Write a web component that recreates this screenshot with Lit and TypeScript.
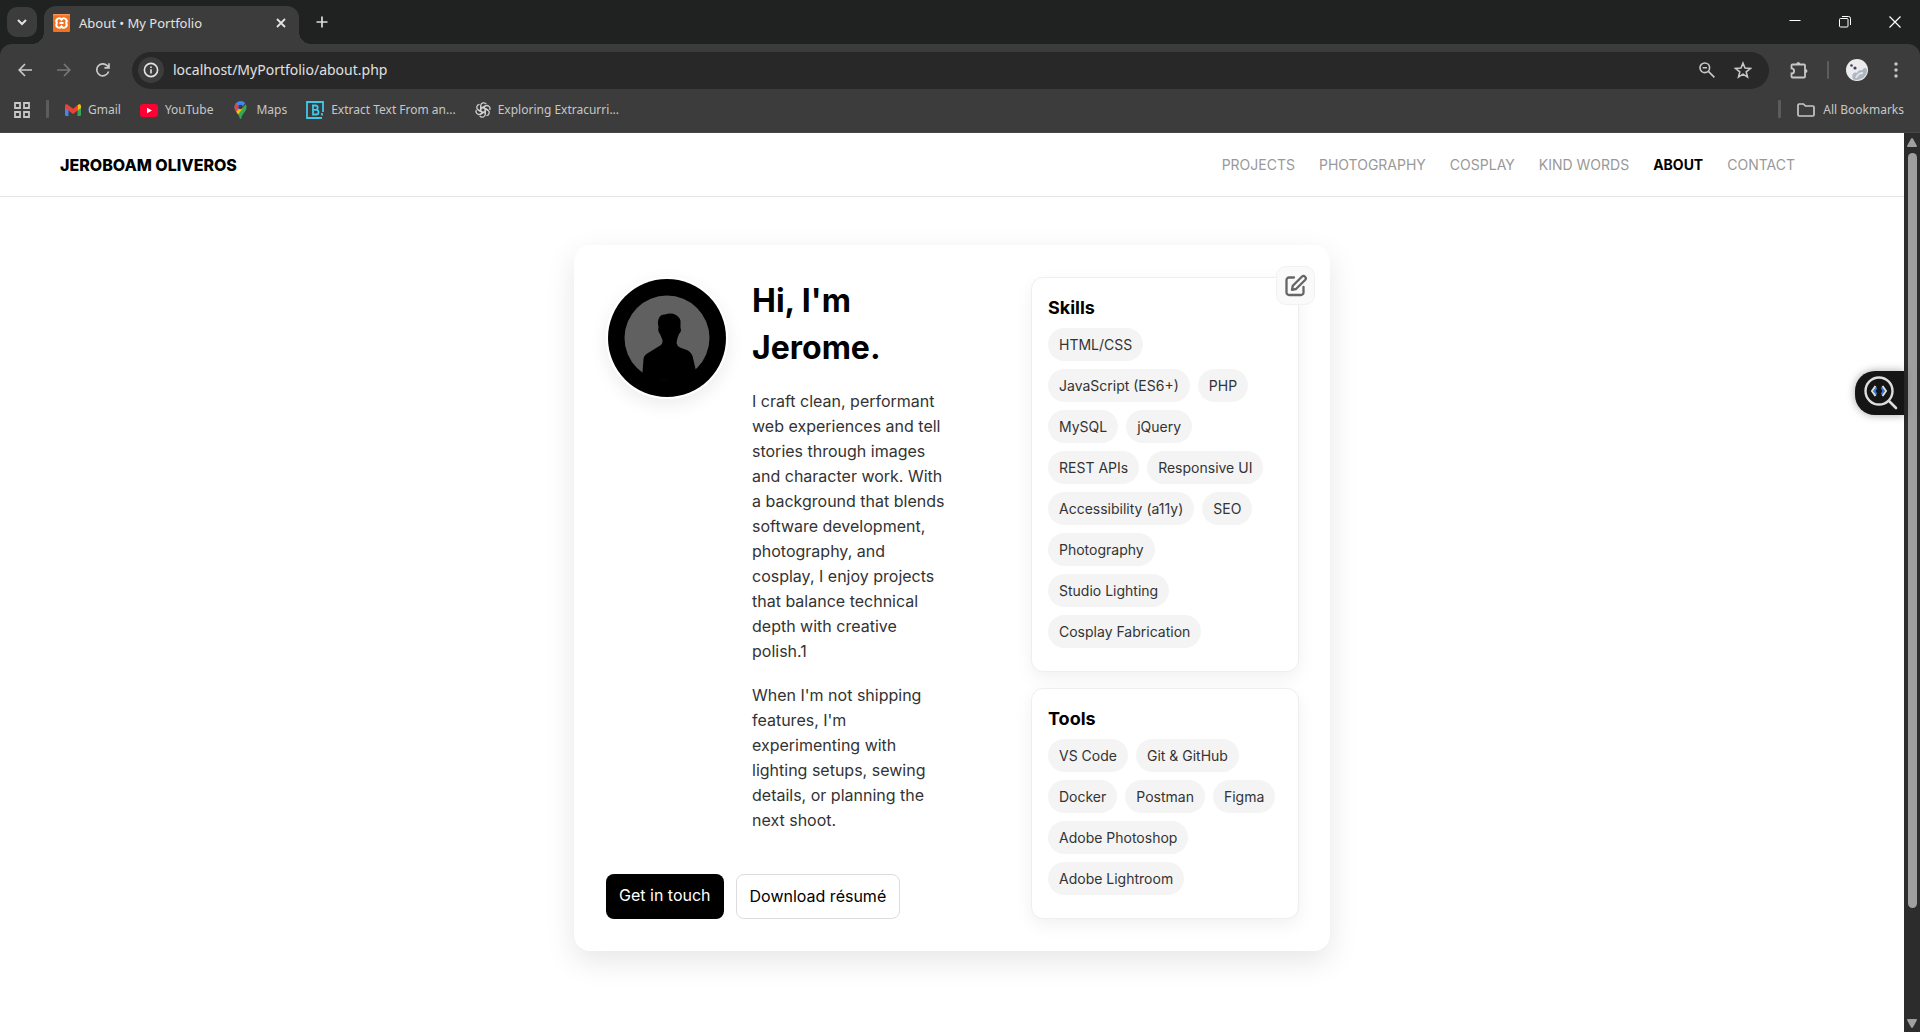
import { LitElement, html, css, svg } from "lit";
import { customElement } from "lit/decorators.js";

const skills = ["HTML/CSS", "JavaScript (ES6+)", "PHP", "MySQL", "jQuery", "REST APIs", "Responsive UI", "Accessibility (a11y)", "SEO", "Photography", "Studio Lighting", "Cosplay Fabrication"];
const tools = ["VS Code", "Git & GitHub", "Docker", "Postman", "Figma", "Adobe Photoshop", "Adobe Lightroom"];
const nav = ["Projects", "Photography", "Cosplay", "Kind Words", "About", "Contact"];

@customElement("browser-chrome")
class BrowserChrome extends LitElement {
  static styles = css`
    :host { display: block; flex: none; background: #202221; color: #e3e3e3; font: 13px/20px "Noto Sans", "Open Sans", sans-serif; }
    button { border: 0; padding: 0; margin: 0; background: none; color: inherit; font: inherit; display: grid; place-items: center; flex: none; }
    svg { display: block; flex: none; }
    a { color: inherit; text-decoration: none; }
    .strip { height: 44px; display: flex; align-items: center; }
    .search { width: 30px; height: 30px; border-radius: 10px; background: #3c3c3c; margin-left: 7px; }
    .tab { position: relative; align-self: flex-end; height: 38px; width: 255px; margin-left: 7px; border-radius: 12px 12px 0 0; background: #3c3c3c; display: flex; align-items: center; padding: 0 8px 4px 9px; box-sizing: border-box; }
    .tab::before, .tab::after { content: ""; position: absolute; bottom: 0; width: 12px; height: 12px; }
    .tab::before { left: -12px; background: radial-gradient(circle at 0 0, transparent 12px, #3c3c3c 12px); }
    .tab::after { right: -12px; background: radial-gradient(circle at 100% 0, transparent 12px, #3c3c3c 12px); }
    .title { flex: 1; margin-left: 9px; }
    .close, .plus { width: 20px; height: 20px; }
    .plus { margin-left: 13px; }
    .space { flex: 1; }
    .win { width: 50px; height: 44px; }
    .bars { background: #3c3c3c; border-radius: 12px 12px 0 0; border-bottom: 1px solid #474747; }
    .bar { height: 52px; display: flex; align-items: center; padding-right: 6px; }
    .nav { width: 39px; height: 34px; color: #c7c7c7; }
    .nav.off { color: #777; }
    .navs { display: flex; margin-left: 5px; }
    .omni { flex: 1; height: 37px; border-radius: 19px; background: #282828; display: flex; align-items: center; margin: 0 12px 0 10px; padding: 0 8px 0 6px; color: #c7c7c7; }
    .info { width: 26px; height: 26px; border-radius: 50%; background: #3c3c3c; color: #e3e3e3; }
    input { flex: 1; border: 0; outline: 0; background: none; color: #e0e0e0; font: 14px/20px "Noto Sans", "Open Sans", sans-serif; padding: 0 0 0 9px; }
    .ico { width: 36px; height: 34px; color: #c7c7c7; }
    .sep { width: 2px; height: 18px; background: #5c5c5c; border-radius: 1px; }
    .bar .sep { margin: 0 17px 0 10px; }
    .face { margin-right: 10px; }
    .marks { box-sizing: border-box; height: 36px; display: flex; align-items: flex-start; padding: 4px 16px 0 14px; color: #c7c7c7; font-size: 12px; }
    .marks > * { height: 20px; display: flex; align-items: center; }
    .marks .sep { width: 3px; height: 18px; margin: 0 16px; }
    .mark { gap: 7px; white-space: nowrap; margin-right: 19px; }
    .all { gap: 8px; margin: 0; }
  `;
  render() {
    return html`
      <div class="strip">
        <button class="search" aria-label="Search tabs"><svg width="10" height="8" viewBox="0 0 10 8"><path d="M1 2l4 4 4-4" fill="none" stroke="#e3e3e3" stroke-width="2"/></svg></button>
        <div class="tab">
          <svg width="17" height="18" viewBox="0 0 17 18"><rect width="17" height="18" rx="1" fill="#f3701e"/><path d="M0 .8H17" stroke="#f9a56b"/><path d="M8.5 5.6C6.5 2.6 1.8 5.2 3.8 9 1.800 12.800 6.500 15.400 8.500 12.400 10.500 15.400 15.200 12.800 13.200 9 15.200 5.200 10.500 2.600 8.500 5.600zM6.500 9h4" fill="none" stroke="#fff" stroke-width="2"/></svg>
          <span class="title">About • My Portfolio</span>
          <button class="close" aria-label="Close tab"><svg width="10" height="10" viewBox="0 0 10 10"><path d="M1 1l8 8M9 1L1 9" stroke="#e3e3e3" stroke-width="1.8"/></svg></button>
        </div>
        <button class="plus" aria-label="New tab"><svg width="12" height="12" viewBox="0 0 12 12"><path d="M6 .5v11M.5 6h11" stroke="#dcdcdc" stroke-width="1.7"/></svg></button>
        <span class="space"></span>
        <button class="win" aria-label="Minimize"><svg width="12" height="12" viewBox="0 0 12 12"><path d="M.5 4.500h11" stroke="#fff"/></svg></button>
        <button class="win" aria-label="Restore"><svg width="12" height="12" viewBox="0 0 12 12" fill="none" stroke="#fff"><rect x=".5" y="2.5" width="8.5" height="8.5" rx="1"/><path d="M3 .5h6.5a2 2 0 0 1 2 2V9"/></svg></button>
        <button class="win" aria-label="Close"><svg width="12" height="12" viewBox="0 0 12 12"><path d="M.5.5l11 11M11.5.5L.5 11.5" stroke="#fff" stroke-width="1.2"/></svg></button>
      </div>
      <div class="bars">
        <div class="bar">
          <div class="navs">
            <button class="nav" aria-label="Back"><svg width="14" height="14" viewBox="0 0 14 14"><path d="M14 7H1.5M7 1L1.2 7 7 13" fill="none" stroke="currentColor" stroke-width="1.7"/></svg></button>
            <button class="nav off" aria-label="Forward"><svg width="14" height="14" viewBox="0 0 14 14"><path d="M0 7h12.5M7 1l5.8 6L7 13" fill="none" stroke="currentColor" stroke-width="1.7"/></svg></button>
            <button class="nav" aria-label="Reload"><svg width="14" height="14" viewBox="0 0 14 14"><path d="M12.6 8.5A6 6 0 1 1 11.4 2.9L13 4.7M13 .3v4.6H8.4" fill="none" stroke="currentColor" stroke-width="1.7"/></svg></button>
          </div>
          <div class="omni">
            <button class="info" aria-label="Site information"><svg width="16" height="16" viewBox="0 0 16 16"><circle cx="8" cy="8" r="6.6" fill="none" stroke="currentColor" stroke-width="1.6"/><path d="M8 7.2v4.2M8 4.4v1.7" stroke="currentColor" stroke-width="1.6"/></svg></button>
            <input aria-label="Address" value="localhost/MyPortfolio/about.php">
            <button class="ico" aria-label="Zoom"><svg width="16" height="16" viewBox="0 0 16 16" fill="none" stroke="currentColor" stroke-width="1.6"><circle cx="5.8" cy="5.8" r="4.8"/><path d="M9.4 9.4l6 6M3.6 5.8H8"/></svg></button>
            <button class="ico" aria-label="Bookmark this page"><svg width="18" height="18" viewBox="0 0 18 18"><path d="M9 2.200L11 7.100 16.300 7.500 12.200 10.900 13.500 16.100 9 13.200 4.500 16.100 5.800 10.900 1.700 7.500 7 7.100z" fill="none" stroke="currentColor" stroke-width="1.6"/></svg></button>
          </div>
          <button class="ico" aria-label="Extensions"><svg width="20" height="20" viewBox="0 0 20 20"><path d="M3.500 4.500H15A1 1 0 0 1 16 5.500V16.500A1 1 0 0 1 15 17.500H3.500A1 1 0 0 1 2.500 16.500V13.500A2.600 2.600 0 0 0 2.500 8.300V5.500A1 1 0 0 1 3.500 4.500z" fill="none" stroke="currentColor" stroke-width="1.800"/><path d="M7.200 4.500a2.100 2.500 0 0 1 4.200 0zM16 9a2.500 2.100 0 0 1 0 4.200z" fill="currentColor"/></svg></button>
          <span class="sep"></span>
          <svg class="face" width="22" height="22" viewBox="0 0 22 22"><circle cx="11" cy="11" r="11" fill="#ecebed"/><path d="M7 20.500C5 15 8 12.500 11 14c2-5 5-1 6-4 2-2 4-1 4 1 0 6-6 11.500-14 9.500z" fill="#aeb6c0"/><path d="M10 19q2-5 7-5" stroke="#dfe3e8" stroke-width="2" fill="none"/><circle cx="5.500" cy="6.500" r="1.300" fill="#43405a"/><circle cx="9" cy="9" r="1.600" fill="#43405a"/></svg>
          <button class="ico" aria-label="Menu"><svg width="4" height="16" viewBox="0 0 4 16" fill="#c7c7c7"><circle cx="2" cy="2" r="1.7"/><circle cx="2" cy="8" r="1.7"/><circle cx="2" cy="14" r="1.7"/></svg></button>
        </div>
        <div class="marks">
          <button aria-label="Tab groups"><svg width="16" height="16" viewBox="0 0 16 16" fill="none" stroke="#c7c7c7" stroke-width="1.8"><path d="M1 1h5v5H1zM10 1h5v5h-5zM1 10h5v5H1zM10 10h5v5h-5z"/></svg></button>
          <span class="sep"></span>
          <a class="mark" href="#gmail"><svg width="16" height="12" viewBox="0 0 16 12"><path d="M0 2h3.500v10H1.200A1.200 1.200 0 0 1 0 10.800z" fill="#4285f4"/><path d="M12.500 2H16v8.800a1.200 1.200 0 0 1-1.200 1.200h-2.300z" fill="#34a853"/><path d="M12.500 1.500l1-.9C14.500-.2 16 .5 16 1.900V4l-3.500 2.600z" fill="#fbbc04"/><path d="M0 1.900C0 .5 1.500-.2 2.500.6L8 4.700 12.500 1.300v5.300L8 10 3.500 6.600 0 4z" fill="#ea4335"/></svg>Gmail</a>
          <a class="mark" href="#youtube"><svg width="18" height="13" viewBox="0 0 18 13"><rect width="18" height="13" rx="3" fill="#ff0033"/><path d="M7 3.7v5.6l5-2.800z" fill="#fff"/></svg>YouTube</a>
          <a class="mark" href="#maps"><svg width="17" height="18" viewBox="0 0 17 18"><path d="M8.500 0a6 6 0 0 1 4.800 2.300L5 11.800C3.600 9.900 2.500 8.400 2.500 6a6 6 0 0 1 6-6z" fill="#4285f4"/><path d="M3.700 2.400L7 5.200 4.300 10.700C3.200 9.300 2.500 7.800 2.500 6c0-1.400.5-2.600 1.200-3.600z" fill="#ea4335"/><path d="M13.900 3.200A6 6 0 0 1 14.500 6c0 5-4.500 6.500-5.200 11.200-.2.900-1.400.9-1.600 0C7.300 15 6.200 13.500 5 11.800z" fill="#34a853"/><path d="M4.300 10.700l5-5.500 1.300 2.200L6.200 13.500z" fill="#fbbc04"/><circle cx="8.500" cy="6" r="2.200" fill="#3c3c3c"/></svg>Maps</a>
          <a class="mark" href="#extract"><svg width="18" height="18" viewBox="0 0 18 18" fill="none" stroke="#3fc8e8" stroke-width="1.8"><path d="M17 11V1H1v16h15M16 12v2.500M6 4.500h3.500a2.200 2.200 0 0 1 0 4.400H7v4.600h3.200a2.300 2.300 0 0 0 0-4.600M7 4.500v9"/></svg>Extract Text From an...</a>
          <a class="mark" href="#exploring"><svg width="16" height="16" viewBox="-8 -8 16 16" fill="none" stroke="#d0d0d0" stroke-width="1.3">${[0, 60, 120, 180, 240, 300].map((a) => svg`<path transform="rotate(${a})" d="M-2.300 1.300V-4.200A3 3 0 0 1 3.200-5.800M-2.300-1.300L2.600-4.200"/>`)}</svg>Exploring Extracurri...</a>
          <span class="space"></span>
          <span class="sep"></span>
          <button class="all"><svg width="18" height="14" viewBox="0 0 18 14"><path d="M1 2.200A1.200 1.200 0 0 1 2.200 1H6.500l2 2h7.300A1.200 1.200 0 0 1 17 4.200v7.600a1.200 1.200 0 0 1-1.200 1.200H2.200A1.200 1.200 0 0 1 1 11.800z" fill="none" stroke="currentColor" stroke-width="1.7"/></svg>All Bookmarks</button>
        </div>
      </div>`;
  }
}

@customElement("chip-card")
class ChipCard extends LitElement {
  static properties = { heading: {}, items: { attribute: false } };
  declare heading: string;
  declare items: string[];
  static styles = css`
    :host { display: block; background: #fff; border: 1px solid #eee; border-radius: 12px; padding: 16px 16px 23px; box-shadow: 0 6px 18px rgba(0, 0, 0, 0.06); }
    h2 { margin: 0; font-size: 18px; line-height: 27px; font-weight: 700; color: #000; }
    ul { list-style: none; margin: 7px 0 0; padding: 0; display: flex; flex-wrap: wrap; gap: 8px; }
    li { background: #f4f4f4; border-radius: 17px; padding: 5px 11px; font-size: 14px; line-height: 23px; color: #333; white-space: nowrap; }
  `;
  render() {
    return html`<h2>${this.heading}</h2><ul>${this.items.map((t) => html`<li>${t}</li>`)}</ul>`;
  }
}

@customElement("app-root")
class AppRoot extends LitElement {
  static styles = css`
    :host { display: flex; flex-direction: column; min-height: 100vh; background: #fff; color: #000; font-family: Inter, "Liberation Sans", sans-serif; }
    a { text-decoration: none; color: inherit; }
    .view { flex: 1; display: flex; }
    .page { flex: 1; position: relative; min-width: 0; }
    header { display: flex; align-items: center; justify-content: space-between; height: 63px; border-bottom: 1px solid #e5e5e5; padding: 0 109px 0 60px; }
    .brand { font-size: 16px; line-height: 24px; font-weight: 800; }
    nav { display: flex; gap: 24px; font-size: 14px; line-height: 22px; color: #999; text-transform: uppercase; }
    nav .on { color: #000; font-weight: 700; }
    .card { position: relative; box-sizing: border-box; max-width: 756px; margin: 48px auto 0; padding: 32px 31px 32px 32px; border-radius: 16px; display: grid; grid-template-columns: minmax(0, 1fr) 268px; gap: 24px; background: #fff; box-shadow: 0 10px 30px rgba(0, 0, 0, 0.1); }
    .main { display: flex; flex-direction: column; justify-content: space-between; }
    .intro { display: flex; gap: 24px; align-items: flex-start; }
    .photo { flex: none; width: 118px; height: 118px; border: 2px solid #fff; border-radius: 50%; box-shadow: 0 6px 18px rgba(0, 0, 0, 0.08); }
    .photo svg { display: block; }
    .text { width: 196px; font-size: 16px; line-height: 25px; color: #333; }
    h1 { margin: 0 0 18px; font-size: 32px; line-height: 47px; font-weight: 700; color: #000; }
    p { margin: 0 0 19px; }
    .actions { display: flex; gap: 12px; }
    .btn { box-sizing: border-box; height: 45px; border-radius: 8px; padding: 10px 13px; font-size: 16px; line-height: 23px; border: 1px solid #ddd; }
    .btn.dark { background: #000; color: #fff; border: 0; }
    .side { display: flex; flex-direction: column; gap: 16px; }
    .edit { position: absolute; right: 15px; top: 21px; width: 39px; height: 39px; border: 1px solid #f0f1f2; border-radius: 10px; background: rgba(249, 250, 251, 0.9); display: grid; place-items: center; padding: 0; }
    .helper { position: absolute; right: 0; top: 238px; width: 49px; height: 44px; border: 0; padding: 0 0 0 8px; border-radius: 20px 0 0 20px; background: #151515; box-shadow: 0 0 8px rgba(0, 0, 0, 0.35); display: flex; align-items: center; }
    .scroll { width: 16px; background: #2c2c2c; display: flex; flex-direction: column; align-items: center; padding: 5px 0 4px; box-sizing: border-box; }
    .thumb { width: 9px; flex: 756; margin-top: 6px; border-radius: 5px; background: #9f9f9f; }
    .rest { flex: 111; }
  `;
  render() {
    return html`
      <browser-chrome></browser-chrome>
      <div class="view">
        <div class="page">
          <header>
            <a class="brand" href="#home">JEROBOAM OLIVEROS</a>
            <nav>${nav.map((n) => html`<a class=${n === "About" ? "on" : ""} href="#${n}">${n}</a>`)}</nav>
          </header>
          <main class="card">
            <section class="main">
              <div class="intro">
                <div class="photo"><svg width="118" height="118" viewBox="0 0 118 118"><circle cx="59" cy="59" r="59"/><circle cx="59" cy="59" r="42.5" fill="#606060"/><path d="M34 100L35.500 80Q36 76 40 74L53 66Q55 64 54.500 61L52 55Q49.500 52 50.500 48 49 42 51.500 38 53 35 57 35.500 63 33.500 68 36 73 39 72.500 44L72.500 49Q74 52 71 55 69 59 68.500 64 69 67 72 68.500L80 71.500Q84 74 85 79L88 92 86 104z"/></svg></div>
                <div class="text">
                  <h1>Hi, I'm Jerome.</h1>
                  <p>I craft clean, performant web experiences and tell stories through images and character work. With a background that blends software development, photography, and cosplay, I enjoy projects that balance technical depth with creative polish.1</p>
                  <p>When I'm not shipping features, I'm experimenting with lighting setups, sewing details, or planning the next shoot.</p>
                </div>
              </div>
              <div class="actions"><a class="btn dark" href="#contact">Get in touch</a><a class="btn" href="#resume">Download résumé</a></div>
            </section>
            <aside class="side">
              <chip-card .heading=${"Skills"} .items=${skills}></chip-card>
              <chip-card .heading=${"Tools"} .items=${tools}></chip-card>
            </aside>
            <button class="edit" aria-label="Edit"><svg width="24" height="24" viewBox="0 0 24 24" fill="none" stroke="#666" stroke-width="2.3" stroke-linecap="round" stroke-linejoin="round"><path d="M10 3.500H5A2.500 2.500 0 0 0 2.500 6V18.500A2.500 2.500 0 0 0 5 21H17A2.500 2.500 0 0 0 19.500 18.500V13"/><path d="M17.800 2.700a2.300 2.300 0 0 1 3.300 3.300L12 15l-4 .800 .800-4z"/></svg></button>
          </main>
          <button class="helper" aria-label="Inspect code"><svg width="36" height="36" viewBox="0 0 36 36" fill="none"><circle cx="16" cy="16" r="13.5" stroke="#ddd" stroke-width="2.4"/><path d="M26 26l7 7" stroke="#ddd" stroke-width="2.6" stroke-linecap="round"/><path d="M13.500 12.500L11.500 16l2 3.500M18.500 12.500l2 3.500-2 3.500" stroke="#2f7de8" stroke-width="1.8"/><path d="M12.500 11l-3.500 5 3.500 5M19.500 11l3.500 5-3.500 5" stroke="#ddd" stroke-width="2"/></svg></button>
        </div>
        <div class="scroll">
          <svg width="10" height="9" viewBox="0 0 10 9"><path d="M5 0q.6 0 1 .7L10 8q0 1-1 1H1Q0 9 0 8L4 .7Q4.400 0 5 0z" fill="#9f9f9f"/></svg>
          <div class="thumb"></div><div class="rest"></div>
          <svg width="10" height="9" viewBox="0 0 10 9"><path d="M5 9q.6 0 1-.7L10 1q0-1-1-1H1Q0 0 0 1L4 8.300Q4.400 9 5 9z" fill="#9f9f9f"/></svg>
        </div>
      </div>`;
  }
}
